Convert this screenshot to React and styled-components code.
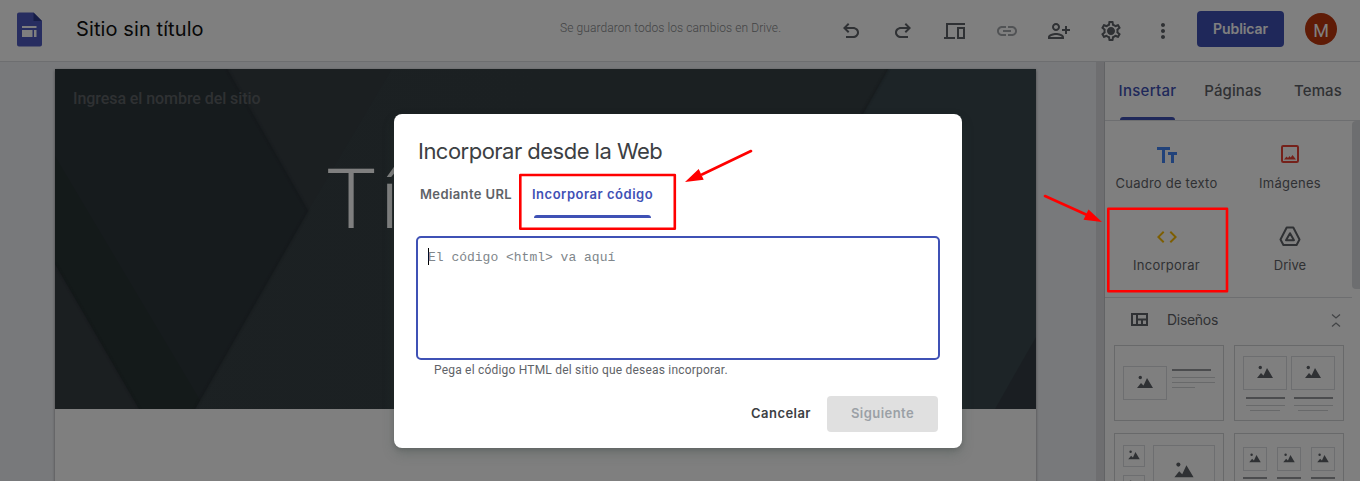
import React from "react";
import styled, { createGlobalStyle } from "styled-components";
import {
  MdLink,
  MdOutlinePersonAddAlt1,
  MdOutlineSettings,
  MdMoreVert,
  MdCode,
} from "react-icons/md";

const sans = `Inter, "Liberation Sans", sans-serif`;
const roboto = `Roboto, "Liberation Sans", sans-serif`;
const indigo = "#3f51b5";

const Global = createGlobalStyle`
  *, *::before, *::after { box-sizing: border-box; }
  html, body { margin: 0; height: 100%; overflow: hidden; }
  button { border: 0; background: none; padding: 0; font: inherit; color: inherit; }
`;

const Shell = styled.div`
  position: relative;
  display: flex;
  flex-direction: column;
  width: 1360px;
  height: 481px;
  overflow: hidden;
  background: #fff;
  font-family: ${sans};
`;

/* Header */
const Header = styled.header`
  display: flex;
  align-items: center;
  flex: none;
  height: 62px;
  padding: 0 23px 3px 17px;
  border-bottom: 1px solid #dadce0;
`;
const DocName = styled.h1`
  flex: none;
  margin: 0 0 0 34px;
  width: 484px;
  font-size: 20px;
  font-weight: 400;
  letter-spacing: 0.1px;
  color: #111;
  white-space: nowrap;
`;
const SaveState = styled.span`
  flex: none;
  width: 265px;
  margin-bottom: 2px;
  font: 300 12px/16px ${roboto};
  letter-spacing: 0.08px;
  color: #85878a;
  white-space: nowrap;
`;
const Tools = styled.nav`
  display: flex;
  padding-top: 4px;
`;
const Tool = styled.button`
  display: flex;
  align-items: center;
  justify-content: center;
  width: 52px;
  height: 24px;
  color: ${(p) => (p.$muted ? "#a3a6aa" : "#5f6368")};
  svg { width: 24px; height: 24px; display: block; }
`;
const Publish = styled.button`
  margin-left: 8px;
  width: 87px;
  height: 36px;
  padding-bottom: 2px;
  border-radius: 4px;
  background: ${indigo};
  color: #fff;
  font-size: 14px;
  font-weight: 600;
  letter-spacing: -0.1px;
`;
const Avatar = styled.div`
  display: flex;
  align-items: center;
  justify-content: center;
  margin-left: 21px;
  width: 32px;
  height: 32px;
  padding-top: 2px;
  border-radius: 50%;
  background: #bf360c;
  color: #fff;
  font: 400 18px ${roboto};
`;

/* Work area */
const Body = styled.div`
  display: flex;
  flex: 1;
  min-height: 0;
`;
const Canvas = styled.main`
  flex: none;
  width: 1096px;
  padding: 7px 60px 0 55px;
  background: #f1f3f7;
`;
const Gutter = styled.div`
  flex: none;
  width: 9px;
  background: #dcdde0;
  border-right: 1px solid #c4c6ca;
`;
const Page = styled.article`
  height: 430px;
  background: #fff;
  box-shadow: 0 1px 3px rgba(0, 0, 0, 0.4);
`;
const Hero = styled.section`
  position: relative;
  height: 340px;
  padding: 20px 0 0 18px;
  overflow: hidden;
`;
const HeroArt = styled.svg`
  position: absolute;
  inset: 0;
  width: 981px;
  height: 340px;
`;
const SiteName = styled.div`
  position: relative;
  font: 500 16px/20px ${roboto};
  letter-spacing: -0.07px;
  color: #5e6366;
`;
const PageTitle = styled.div`
  position: relative;
  margin: 39px 0 0 253px;
  font: 300 84px/104px ${roboto};
  letter-spacing: 4px;
  color: #fff;
  white-space: nowrap;
`;

/* Side panel */
const Panel = styled.aside`
  flex: 1;
  display: flex;
  flex-direction: column;
  background: #fff;
`;
const PanelTabs = styled.div`
  display: flex;
  flex: none;
  height: 59px;
  border-bottom: 1px solid #dadce0;
`;
const PanelTab = styled.button`
  position: relative;
  width: ${(p) => p.$w}px;
  height: 58px;
  padding-bottom: 1px;
  color: ${(p) => (p.$on ? indigo : "#5f6368")};
  font-size: 15px;
  font-weight: 500;
  letter-spacing: ${(p) => p.$ls || 0}px;
  &::after {
    content: ${(p) => (p.$on ? '""' : "none")};
    position: absolute;
    left: 15px;
    right: 15px;
    bottom: 0;
    height: 3px;
    border-radius: 3px 3px 0 0;
    background: ${indigo};
  }
`;
const PanelBody = styled.div`
  display: flex;
  flex: 1;
  min-height: 0;
`;
const PanelContent = styled.div`
  flex: none;
  width: 247px;
`;
const ScrollThumb = styled.div`
  width: 8px;
  height: 168px;
  border-radius: 4px 0 0 4px;
  background: #dadce0;
`;
const InsertGrid = styled.div`
  display: grid;
  grid-template-columns: 123px 124px;
  grid-auto-rows: 82px;
  height: 177px;
  padding-top: 13px;
  border-bottom: 1px solid #dadce0;
`;
const InsertItem = styled.button`
  display: flex;
  flex-direction: column;
  align-items: center;
  justify-content: flex-start;
  padding-top: 9px;
  gap: 7px;
  font-size: 13px;
  line-height: 18px;
  letter-spacing: ${(p) => p.$ls || 0}px;
  color: #5f6368;
  white-space: nowrap;
  svg { width: 24px; height: 24px; flex: none; color: ${(p) => p.$tint}; }
`;
const SectionHead = styled.div`
  display: flex;
  align-items: center;
  height: 47px;
  padding: 0 8px 4px 26px;
  font-size: 14px;
  letter-spacing: -0.3px;
  color: #5f6368;
  span { flex: 1; margin-left: 19px; }
`;
const Layouts = styled.div`
  display: grid;
  grid-template-columns: 110px 110px;
  grid-auto-rows: 76px;
  column-gap: 10px;
  row-gap: 12px;
  padding-left: 9px;
`;
const Thumb = styled.svg`
  display: block;
  width: 110px;
  height: 76px;
`;

/* Dialog */
const Scrim = styled.div`
  position: absolute;
  inset: 0;
  display: flex;
  justify-content: center;
  align-items: flex-start;
  padding: 114px 4px 0 0;
  background: rgba(0, 0, 0, 0.5);
`;
const Dialog = styled.section`
  width: 568px;
  height: 334px;
  padding: 22px 22px 0;
  border-radius: 8px;
  background: #fff;
  box-shadow: 0 6px 12px rgba(60, 80, 70, 0.25), 0 2px 5px rgba(0, 0, 0, 0.15);
`;
const DialogTitle = styled.h2`
  margin: 0 0 0 2px;
  font-size: 22px;
  line-height: 31px;
  font-weight: 400;
  letter-spacing: -0.52px;
  color: #3c4043;
`;
const DialogTabs = styled.div`
  display: flex;
  gap: 20px;
  padding-left: 4px;
  height: 51px;
`;
const DialogTab = styled.button`
  position: relative;
  display: flex;
  align-items: center;
  width: ${(p) => p.$w}px;
  height: 51px;
  padding-top: 2px;
  font-size: 13px;
  font-weight: 600;
  letter-spacing: ${(p) => p.$ls}px;
  color: ${(p) => (p.$on ? indigo : "#5f6368")};
  white-space: nowrap;
  &::after {
    content: ${(p) => (p.$on ? '""' : "none")};
    position: absolute;
    left: 2px;
    right: 2px;
    bottom: 0;
    height: 3px;
    border-radius: 3px 3px 0 0;
    background: ${indigo};
  }
`;
const CodeField = styled.div`
  display: flex;
  margin-top: 18px;
  height: 124px;
  padding: 10px;
  border: 2px solid ${indigo};
  border-radius: 5px;
  font: 400 13px/20px "Liberation Mono", monospace;
  color: #80868b;
`;
const Caret = styled.i`
  width: 1px;
  height: 17px;
  margin-right: -1px;
  background: #000;
`;
const Hint = styled.p`
  margin: 2px 0 0 18px;
  font: 400 12px/16px ${roboto};
  letter-spacing: 0.2px;
  color: #5f6368;
`;
const Actions = styled.div`
  display: flex;
  justify-content: flex-end;
  align-items: center;
  gap: 16px;
  margin: 18px 2px 0 0;
`;
const Action = styled.button`
  height: 36px;
  width: ${(p) => p.$w}px;
  padding-bottom: 2px;
  border-radius: 4px;
  background: ${(p) => (p.$disabled ? "#e0e0e0" : "transparent")};
  color: ${(p) => (p.$disabled ? "#9ba0a6" : "#3c4043")};
  font-size: 13px;
  font-weight: 600;
  letter-spacing: ${(p) => p.$ls}px;
  white-space: nowrap;
`;
const Marks = styled.svg`
  position: absolute;
  inset: 0;
  width: 1360px;
  height: 481px;
  pointer-events: none;
`;

const SitesLogo = () => (
  <svg width="25" height="35" viewBox="0 0 25 35">
    <path d="M2 .5h14.500L25 9v23.500a2 2 0 0 1-2 2H2a2 2 0 0 1-2-2v-30a2 2 0 0 1 2-2z" fill="#4e5bc0" />
    <path d="M16.500.5L25 9h-8.500z" fill="#2d3a8c" />
    <path d="M5 14h14.500v2H5zM5 18h10.500v7H5zM17 18h2.500v7H17z" fill="#fff" />
  </svg>
);

const undoPath =
  "M7 19v-2h7.100c1.050 0 1.960-.33 2.740-1s1.160-1.500 1.160-2.500-.39-1.830-1.160-2.500-1.690-1-2.740-1H7.800l2.600 2.600L9 14 4 9l5-5 1.400 1.400L7.800 8h6.300c1.600 0 2.980.52 4.140 1.560S20 11.900 20 13.500s-.58 2.900-1.760 3.940S15.700 19 14.100 19z";
const Undo = () => (
  <svg viewBox="0 0 24 24" fill="currentColor"><path d={undoPath} /></svg>
);
const Redo = () => (
  <svg viewBox="0 0 24 24" fill="currentColor"><path d={undoPath} transform="matrix(-1 0 0 1 24 0)" /></svg>
);
const Devices = () => (
  <svg viewBox="0 0 24 24" fill="none" stroke="currentColor" strokeWidth="2">
    <path d="M22 5H4v13M1 19h11" />
    <rect x="15" y="9" width="6" height="10" />
  </svg>
);
const Gear = () => (
  <svg viewBox="0 0 24 24" fill="currentColor">
    <MdOutlineSettings size={24} />
    <circle cx="12" cy="12" r="3.300" />
  </svg>
);
const TextIcon = () => (
  <svg viewBox="0 0 24 24" fill="currentColor">
    <path d="M2 4h13v3h-5v13H7V7H2zM13 9h9v3h-3v8h-3v-8h-3z" />
  </svg>
);
const ImageIcon = () => (
  <svg viewBox="0 0 24 24">
    <rect x="4" y="3" width="16" height="16" rx="1.200" fill="none" stroke="currentColor" strokeWidth="2" />
    <path d="M6 16.500l2.500-3 1.500 1.500 1.500-2 1.200 1.500 1.800-2.500 3.500 4.500z" fill="currentColor" />
  </svg>
);
const DriveIcon = () => (
  <svg viewBox="0 0 24 24" fill="none" stroke="currentColor" strokeWidth="2" strokeLinejoin="round">
    <path d="M8.700 2.500h6.600l6.200 12-2.900 5.500H5.400l-2.900-5.500z" />
    <path d="M12 8.200l4 7H8z" />
  </svg>
);
const LayoutIcon = () => (
  <svg width="17" height="13" viewBox="0 0 17 13" fill="none" stroke="#5f6368" strokeWidth="2">
    <rect x="1" y="1" width="15" height="11" />
    <path d="M6 1v11M6 6.500h10M11 6.500V12" />
  </svg>
);
const FoldIcon = () => (
  <svg width="16" height="16" viewBox="0 0 16 16" fill="none" stroke="#85888c" strokeWidth="1.300">
    <path d="M4 2.500l4 3.500 4-3.500M4 14.500L8 11l4 3.500" />
  </svg>
);

/* Picture placeholder: a frame with a centred mountain glyph */
const Pic = ({ x, y, w, h, s = 1 }) => (
  <g>
    <rect x={x + 0.5} y={y + 0.5} width={w - 1} height={h - 1} fill="none" stroke="#dadce0" />
    <g transform={`translate(${x + w / 2} ${y + h / 2 - 1}) scale(${s})`} fill="#5f6368">
      <path d="M-8 6l4-5 2.500 2.500L2-4l6 10z" />
      <circle cx="-4.700" cy="-4.500" r="1.700" />
    </g>
  </g>
);
const Bar = ({ x, y, w, bold }) => (
  <rect x={x} y={y} width={w} height={bold ? 2 : 1} fill={bold ? "#96999d" : "#d0d2d5"} />
);
const Frame = ({ children }) => (
  <Thumb viewBox="0 0 110 76">
    <rect x=".5" y=".5" width="109" height="75" fill="none" stroke="#d0d2d5" />
    {children}
  </Thumb>
);

const Backdrop = () => (
  <HeroArt viewBox="55 69 981 340" preserveAspectRatio="none">
    <defs>
      <linearGradient id="mid" x1="0" x2="1">
        <stop offset="0" stopColor="#384246" />
        <stop offset="1" stopColor="#364044" />
      </linearGradient>
      <filter id="soft" x="-10%" y="-10%" width="120%" height="120%"><feGaussianBlur stdDeviation="1.200" /></filter>
    </defs>
    <rect x="55" y="69" width="981" height="340" fill="url(#mid)" />
    <path d="M227 69H392L308 211z" fill="#363e43" />
    <path d="M55 69H227L308 211 195 409H55z" fill="#2d363b" />
    <path d="M55 156L200 400 195 409H139L55 264z" fill="#283434" />
    <path d="M55 264L139 409H55z" fill="#373e43" />
    <path d="M888 69h148v340H700z" fill="#3a484e" />
    <path d="M1036 337v72h-41z" fill="#353d44" />
    <g fill="none" stroke="#20282b" strokeWidth="2" opacity=".45" filter="url(#soft)">
      <path d="M227 69L308 211 195 409M55 264L139 409M888 69L862 114" />
    </g>
  </HeroArt>
);

export default function App() {
  return (
    <Shell>
      <Global />
      <Header>
        <SitesLogo />
        <DocName>Sitio sin título</DocName>
        <SaveState>Se guardaron todos los cambios en Drive.</SaveState>
        <Tools>
          <Tool><Undo /></Tool>
          <Tool><Redo /></Tool>
          <Tool><Devices /></Tool>
          <Tool $muted><MdLink /></Tool>
          <Tool><MdOutlinePersonAddAlt1 /></Tool>
          <Tool><Gear /></Tool>
          <Tool><MdMoreVert /></Tool>
        </Tools>
        <Publish>Publicar</Publish>
        <Avatar>M</Avatar>
      </Header>
      <Body>
        <Canvas>
          <Page>
            <Hero>
              <Backdrop />
              <SiteName>Ingresa el nombre del sitio</SiteName>
              <PageTitle>Tí</PageTitle>
            </Hero>
          </Page>
        </Canvas>
        <Gutter />
        <Panel>
          <PanelTabs>
            <PanelTab $on $w={85} $ls={0.3}>Insertar</PanelTab>
            <PanelTab $w={86} $ls={0.1}>Páginas</PanelTab>
            <PanelTab $w={84} $ls={0.1}>Temas</PanelTab>
          </PanelTabs>
          <PanelBody>
            <PanelContent>
              <InsertGrid>
                <InsertItem $tint="#4285f4" $ls={0.23}><TextIcon />Cuadro de texto</InsertItem>
                <InsertItem $tint="#ea4335" $ls={0.25}><ImageIcon />Imágenes</InsertItem>
                <InsertItem $tint="#fbbc04" $ls={0.25}><MdCode />Incorporar</InsertItem>
                <InsertItem $tint="#5f6368"><DriveIcon />Drive</InsertItem>
              </InsertGrid>
              <SectionHead><LayoutIcon /><span>Diseños</span><FoldIcon /></SectionHead>
              <Layouts>
                <Frame>
                  <Pic x={9} y={21} w={44} h={34} />
                  <Bar x={58} y={24} w={39} bold />
                  <Bar x={58} y={32} w={43} />
                  <Bar x={58} y={37} w={43} />
                  <Bar x={58} y={42} w={23} />
                </Frame>
                <Frame>
                  {[9, 57].map((x) => (
                    <g key={x}>
                      <Pic x={x} y={11} w={44} h={34} />
                      <Bar x={x + 3} y={52} w={39} bold />
                      <Bar x={x + 3} y={60} w={39} />
                      <Bar x={x + 7} y={65} w={30} />
                    </g>
                  ))}
                </Frame>
                <Frame>
                  <Pic x={9} y={12} w={22} h={22} s={0.72} />
                  <Pic x={9} y={42} w={22} h={22} s={0.72} />
                  <Pic x={39} y={12} w={62} h={52} s={1.2} />
                </Frame>
                <Frame>
                  {[9, 43, 77].map((x) => (
                    <g key={x}>
                      <Pic x={x} y={14} w={24} h={24} s={0.72} />
                      <Bar x={x} y={44} w={24} bold />
                    </g>
                  ))}
                </Frame>
              </Layouts>
            </PanelContent>
            <ScrollThumb />
          </PanelBody>
        </Panel>
      </Body>
      <Scrim>
        <Dialog>
          <DialogTitle>Incorporar desde la Web</DialogTitle>
          <DialogTabs>
            <DialogTab $w={92} $ls={0.38}>Mediante URL</DialogTab>
            <DialogTab $on $w={121} $ls={0.52}>Incorporar código</DialogTab>
          </DialogTabs>
          <CodeField><Caret />El código &lt;html&gt; va aquí</CodeField>
          <Hint>Pega el código HTML del sitio que deseas incorporar.</Hint>
          <Actions>
            <Action $w={60} $ls={0.45}>Cancelar</Action>
            <Action $w={111} $ls={0.45} $disabled>Siguiente</Action>
          </Actions>
        </Dialog>
      </Scrim>
      <Marks viewBox="0 0 1360 481" fill="none" stroke="#f00" strokeWidth="2.600" strokeLinejoin="round" strokeLinecap="round">
        <rect x="520.300" y="175" width="154.500" height="53.800" />
        <rect x="1108.300" y="208.800" width="118.700" height="82.500" />
        <path d="M751 151L702 174.500M1045 196L1086 214.500" />
        <path d="M685 182L698.700 169 703.700 179.700zM1102 222L1088.500 209.500 1083.500 219.700z" fill="#f00" stroke="none" />
      </Marks>
    </Shell>
  );
}
